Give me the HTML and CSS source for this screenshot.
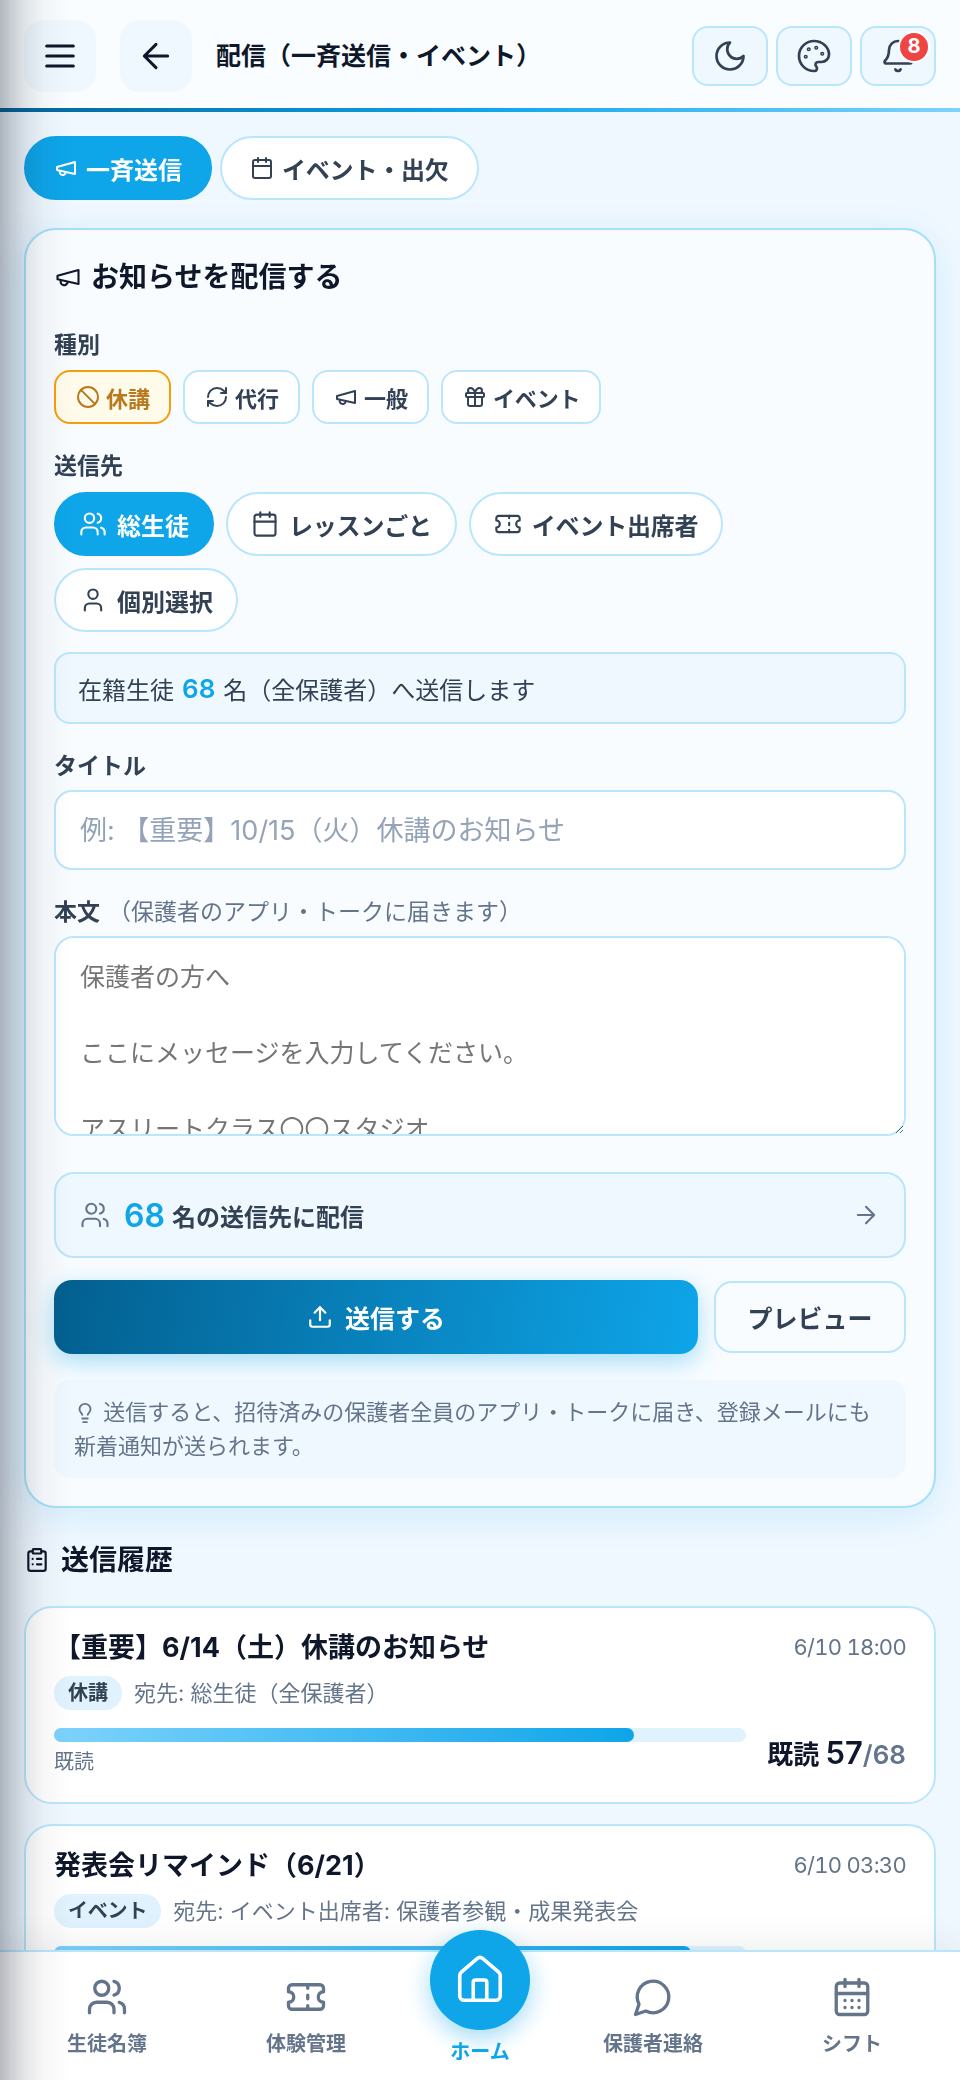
FILE: index.html
```html
<!DOCTYPE html>
<html lang="ja">
<head>
<meta charset="utf-8">
<title>配信（一斉送信・イベント）</title>
<link rel="stylesheet" href="styles.css">
</head>
<body>
<svg class="sprite" aria-hidden="true">
  <symbol id="i-menu" viewBox="0 0 24 24"><path d="M4 6h16M4 12h16M4 18h16"/></symbol>
  <symbol id="i-back" viewBox="0 0 24 24"><path d="m12 19-7-7 7-7M19 12H5"/></symbol>
  <symbol id="i-moon" viewBox="0 0 24 24"><path d="M12 3a6 6 0 0 0 9 9 9 9 0 1 1-9-9Z"/></symbol>
  <symbol id="i-palette" viewBox="0 0 24 24"><path d="M12 22a1 1 0 0 1 0-20 10 9 0 0 1 10 9 5 5 0 0 1-5 5h-2.25a1.75 1.75 0 0 0-1.4 2.8l.3.4a1.75 1.75 0 0 1-1.4 2.8z"/><circle cx="13.5" cy="6.5" r=".5"/><circle cx="17.5" cy="10.5" r=".5"/><circle cx="6.5" cy="12.5" r=".5"/><circle cx="8.5" cy="7.5" r=".5"/></symbol>
  <symbol id="i-bell" viewBox="0 0 24 24"><path d="M10.268 21a2 2 0 0 0 3.464 0"/><path d="M3.262 15.326A1 1 0 0 0 4 17h16a1 1 0 0 0 .74-1.673C19.41 13.956 18 12.499 18 8A6 6 0 0 0 6 8c0 4.499-1.411 5.956-2.738 7.326"/></symbol>
  <symbol id="i-mega" viewBox="0 0 24 24"><path d="m3 11 18-5v12L3 14v-3z"/><path d="M11.6 16.8a3 3 0 1 1-5.8-1.6"/></symbol>
  <symbol id="i-cal" viewBox="0 0 24 24"><rect x="3" y="4" width="18" height="18" rx="2"/><path d="M16 2v4M8 2v4M3 10h18"/></symbol>
  <symbol id="i-ban" viewBox="0 0 24 24"><circle cx="12" cy="12" r="10"/><path d="m4.9 4.9 14.2 14.2"/></symbol>
  <symbol id="i-refresh" viewBox="0 0 24 24"><path d="M3 12a9 9 0 0 1 9-9 9.75 9.75 0 0 1 6.74 2.74L21 8"/><path d="M21 3v5h-5"/><path d="M21 12a9 9 0 0 1-9 9 9.75 9.75 0 0 1-6.74-2.74L3 16"/><path d="M8 16H3v5"/></symbol>
  <symbol id="i-gift" viewBox="0 0 24 24"><rect x="3" y="8" width="18" height="4" rx="1"/><path d="M12 8v13"/><path d="M19 12v7a2 2 0 0 1-2 2H7a2 2 0 0 1-2-2v-7"/><path d="M7.5 8a2.5 2.5 0 0 1 0-5A4.8 8 0 0 1 12 8a4.8 8 0 0 1 4.5-5 2.5 2.5 0 0 1 0 5"/></symbol>
  <symbol id="i-users" viewBox="0 0 24 24"><path d="M16 21v-2a4 4 0 0 0-4-4H6a4 4 0 0 0-4 4v2"/><circle cx="9" cy="7" r="4"/><path d="M22 21v-2a4 4 0 0 0-3-3.87"/><path d="M16 3.13a4 4 0 0 1 0 7.75"/></symbol>
  <symbol id="i-ticket" viewBox="0 0 24 24"><path d="M2 9a3 3 0 0 1 0 6v2a2 2 0 0 0 2 2h16a2 2 0 0 0 2-2v-2a3 3 0 0 1 0-6V7a2 2 0 0 0-2-2H4a2 2 0 0 0-2 2Z"/><path d="M13 5v2M13 17v2M13 11v2"/></symbol>
  <symbol id="i-user" viewBox="0 0 24 24"><path d="M19 21v-2a4 4 0 0 0-4-4H9a4 4 0 0 0-4 4v2"/><circle cx="12" cy="7" r="4"/></symbol>
  <symbol id="i-arrow" viewBox="0 0 24 24"><path d="M5 12h14M12 5l7 7-7 7"/></symbol>
  <symbol id="i-upload" viewBox="0 0 24 24"><path d="M21 15v4a2 2 0 0 1-2 2H5a2 2 0 0 1-2-2v-4"/><path d="m17 8-5-5-5 5"/><path d="M12 3v12"/></symbol>
  <symbol id="i-bulb" viewBox="0 0 24 24"><path d="M15 14c.2-1 .7-1.7 1.5-2.5 1-.9 1.5-2.2 1.5-3.5A6 6 0 0 0 6 8c0 1 .2 2.2 1.5 3.5.7.7 1.3 1.5 1.5 2.5"/><path d="M9 18h6M10 22h4"/></symbol>
  <symbol id="i-clip" viewBox="0 0 24 24"><rect x="8" y="2" width="8" height="4" rx="1"/><path d="M16 4h2a2 2 0 0 1 2 2v14a2 2 0 0 1-2 2H6a2 2 0 0 1-2-2V6a2 2 0 0 1 2-2h2"/><path d="M12 11h4M12 16h4M8 11h.01M8 16h.01"/></symbol>
  <symbol id="i-home" viewBox="0 0 24 24"><path d="M15 21v-8a1 1 0 0 0-1-1h-4a1 1 0 0 0-1 1v8"/><path d="M3 10a2 2 0 0 1 .709-1.528l7-5.999a2 2 0 0 1 2.582 0l7 5.999A2 2 0 0 1 21 10v9a2 2 0 0 1-2 2H5a2 2 0 0 1-2-2z"/></symbol>
  <symbol id="i-chat" viewBox="0 0 24 24"><path d="M7.9 20A9 9 0 1 0 4 16.1L2 22Z"/></symbol>
  <symbol id="i-caldays" viewBox="0 0 24 24"><path d="M8 2v4M16 2v4"/><rect x="3" y="4" width="18" height="18" rx="2"/><path d="M3 10h18M8 14h.01M12 14h.01M16 14h.01M8 18h.01M12 18h.01M16 18h.01"/></symbol>
</svg>

<div class="app">
  <header class="topbar">
    <button class="square-btn"><svg class="icon s40"><use href="#i-menu"/></svg></button>
    <button class="square-btn"><svg class="icon s40"><use href="#i-back"/></svg></button>
    <h1 class="page-title">配信（一斉送信・イベント）</h1>
    <div class="top-actions">
      <button class="tool-btn"><svg class="icon s36"><use href="#i-moon"/></svg></button>
      <button class="tool-btn"><svg class="icon s36"><use href="#i-palette"/></svg></button>
      <button class="tool-btn"><svg class="icon s36"><use href="#i-bell"/></svg><span class="badge">8</span></button>
    </div>
  </header>
  <div class="top-line"></div>

  <main class="content">
    <div class="tabs">
      <button class="tab tab-on"><svg class="icon s24"><use href="#i-mega"/></svg>一斉送信</button>
      <button class="tab kana"><svg class="icon s24"><use href="#i-cal"/></svg>イベント・出欠</button>
    </div>

    <section class="compose">
      <h2 class="compose-title"><svg class="icon s28"><use href="#i-mega"/></svg>お知らせを配信する</h2>

      <div class="label label-first">種別</div>
      <div class="chips">
        <button class="type-chip type-on"><svg class="icon s24"><use href="#i-ban"/></svg>休講</button>
        <button class="type-chip"><svg class="icon s24"><use href="#i-refresh"/></svg>代行</button>
        <button class="type-chip"><svg class="icon s24"><use href="#i-mega"/></svg>一般</button>
        <button class="type-chip kana"><svg class="icon s24"><use href="#i-gift"/></svg>イベント</button>
      </div>

      <div class="label label-next">送信先</div>
      <div class="chips">
        <button class="aud-chip aud-on"><svg class="icon s28"><use href="#i-users"/></svg>総生徒</button>
        <button class="aud-chip kana"><svg class="icon s28"><use href="#i-cal"/></svg>レッスンごと</button>
        <button class="aud-chip kana"><svg class="icon s28"><use href="#i-ticket"/></svg>イベント出席者</button>
        <button class="aud-chip"><svg class="icon s28"><use href="#i-user"/></svg>個別選択</button>
      </div>

      <div class="info-box">在籍生徒 <strong class="info-num">68</strong> 名（全保護者）へ送信します</div>

      <label class="label label-field" for="title">タイトル</label>
      <input class="text-input" id="title" type="text" placeholder="例: 【重要】10/15（火）休講のお知らせ">

      <label class="label label-field" for="body">本文<span class="label-sub">（保護者のアプリ・トークに届きます）</span></label>
      <textarea class="text-area" id="body" placeholder="保護者の方へ

ここにメッセージを入力してください。

アスリートクラス〇〇スタジオ"></textarea>

      <div class="summary">
        <svg class="icon s30 muted"><use href="#i-users"/></svg>
        <span class="summary-num">68</span>
        <span class="summary-text">名の送信先に配信</span>
        <svg class="icon s28 muted summary-arrow"><use href="#i-arrow"/></svg>
      </div>

      <div class="send-row">
        <button class="send-btn"><svg class="icon s26"><use href="#i-upload"/></svg>送信する</button>
        <button class="preview-btn">プレビュー</button>
      </div>

      <p class="note"><svg class="icon s22"><use href="#i-bulb"/></svg> 送信すると、招待済みの保護者全員のアプリ・トークに届き、登録メールにも新着通知が送られます。</p>
    </section>

    <h2 class="history-title"><svg class="icon s26"><use href="#i-clip"/></svg>送信履歴</h2>

    <article class="history-card">
      <div class="h-top"><h3 class="h-title">【重要】6/14（土）休講のお知らせ</h3><time class="h-date">6/10 18:00</time></div>
      <div class="h-meta"><span class="h-tag">休講</span><span>宛先: 総生徒（全保護者）</span></div>
      <div class="h-read">
        <div class="h-bar-wrap">
          <div class="h-bar"><div class="h-fill" style="width:83.8%"></div></div>
          <div class="h-bar-label">既読</div>
        </div>
        <div class="h-stat">既読 <b class="h-stat-num">57</b><span class="h-stat-total">/68</span></div>
      </div>
    </article>

    <article class="history-card">
      <div class="h-top"><h3 class="h-title">発表会リマインド（6/21）</h3><time class="h-date">6/10 03:30</time></div>
      <div class="h-meta"><span class="h-tag kana">イベント</span><span>宛先: イベント出席者: 保護者参観・成果発表会</span></div>
      <div class="h-read">
        <div class="h-bar-wrap">
          <div class="h-bar"><div class="h-fill" style="width:92%"></div></div>
        </div>
      </div>
    </article>
  </main>

  <nav class="bottom-nav">
    <a class="nav-item"><svg class="icon s42"><use href="#i-users"/></svg><span>生徒名簿</span></a>
    <a class="nav-item"><svg class="icon s42"><use href="#i-ticket"/></svg><span>体験管理</span></a>
    <a class="nav-item nav-home"><span class="home-disc"><svg class="icon s54"><use href="#i-home"/></svg></span><span>ホーム</span></a>
    <a class="nav-item"><svg class="icon s42"><use href="#i-chat"/></svg><span>保護者連絡</span></a>
    <a class="nav-item"><svg class="icon s42"><use href="#i-caldays"/></svg><span>シフト</span></a>
  </nav>

  <div class="edge-shade"></div>
</div>
</body>
</html>
```

FILE: styles.css
```css
* { box-sizing: border-box; }

html, body {
  margin: 0;
  height: 100%;
}

body {
  font-family: Inter, "Noto Sans CJK JP", sans-serif;
  color: #0f172a;
  background: #f0f8ff;
  overflow: hidden;
}

button, input, textarea {
  font-family: inherit;
}

.sprite { display: none; }

.kana { letter-spacing: -.2px; }

.icon {
  flex: none;
  fill: none;
  stroke: currentColor;
  stroke-width: 2;
  stroke-linecap: round;
  stroke-linejoin: round;
}
.s22 { width: 22px; height: 22px; }
.s24 { width: 24px; height: 24px; }
.s26 { width: 26px; height: 26px; }
.s28 { width: 28px; height: 28px; stroke-width: 1.8; }
.s30 { width: 30px; height: 30px; stroke-width: 1.7; }
.s36 { width: 36px; height: 36px; stroke-width: 1.8; }
.s40 { width: 40px; height: 40px; stroke-width: 1.8; }
.s42 { width: 42px; height: 42px; stroke-width: 1.9; }
.s54 { width: 54px; height: 54px; stroke-width: 1.6; }
.muted { color: #64748b; }

.app {
  position: relative;
  display: flex;
  flex-direction: column;
  height: 2080px;
  overflow: hidden;
}

/* header */
.topbar {
  display: flex;
  align-items: center;
  gap: 24px;
  height: 108px;
  padding: 4px 24px 0;
  background: #f9fdff;
}
.square-btn {
  display: flex;
  align-items: center;
  justify-content: center;
  width: 72px;
  height: 72px;
  padding: 0;
  border: 0;
  border-radius: 20px;
  background: #f0f8ff;
  color: #0f172a;
}
.page-title {
  margin: 0;
  font-size: 25px;
  line-height: 36px;
  font-weight: 700;
  white-space: nowrap;
}
.top-actions {
  display: flex;
  gap: 8px;
  margin-left: auto;
}
.tool-btn {
  position: relative;
  display: flex;
  align-items: center;
  justify-content: center;
  width: 76px;
  height: 60px;
  padding: 0;
  border: 2px solid #bae6fd;
  border-radius: 16px;
  background: #f0f8ff;
  color: #334155;
}
.badge {
  position: absolute;
  left: 36px;
  top: 3px;
  width: 32px;
  height: 32px;
  border: 2px solid #fff;
  border-radius: 50%;
  background: #ef4444;
  color: #fff;
  font-size: 20px;
  line-height: 27px;
  font-weight: 700;
  text-align: center;
}
.top-line {
  flex: none;
  height: 4px;
  background: linear-gradient(90deg, #03659a 0%, #0ea5e9 50%, #7dd3fc 100%);
}

/* main */
.content {
  flex: 1;
  min-height: 0;
  overflow: hidden;
  padding: 24px 24px 0;
}
.tabs {
  display: flex;
  gap: 8px;
}
.tab {
  display: flex;
  align-items: center;
  gap: 8px;
  height: 64px;
  padding: 0 28px;
  border: 2px solid #bae6fd;
  border-radius: 32px;
  background: #fff;
  color: #334155;
  font-size: 24px;
  font-weight: 700;
}
.tab-on {
  border-color: #0ea5e9;
  background: #0ea5e9;
  color: #fff;
}

.compose {
  margin-top: 28px;
  padding: 29px 28px 28px;
  border: 2px solid #a6dff8;
  border-radius: 32px;
  background: #f8fcff;
  box-shadow: 0 8px 40px rgba(14, 165, 233, .14);
}
.compose-title {
  display: flex;
  align-items: center;
  gap: 9px;
  margin: 0;
  font-size: 28px;
  line-height: 36px;
  font-weight: 700;
}
.label {
  display: block;
  margin-bottom: 12px;
  color: #334155;
  font-size: 23px;
  line-height: 28px;
  font-weight: 700;
}
.label-first { margin-top: 36px; margin-bottom: 11px; }
.label-next { margin-top: 28px; }
.label-field { margin-top: 28px; margin-bottom: 10px; }
.label-sub {
  margin-left: 8px;
  color: #64748b;
  font-weight: 400;
}

.chips {
  display: flex;
  flex-wrap: wrap;
  gap: 12px;
}
.type-chip {
  display: flex;
  align-items: center;
  gap: 6px;
  height: 54px;
  padding: 0 19px 0 20px;
  border: 2px solid #bae6fd;
  border-radius: 16px;
  background: #fff;
  color: #334155;
  font-size: 22px;
  font-weight: 700;
}
.type-on {
  border-color: #f59e0b;
  background: #fffbeb;
  color: #b9791f;
}
.aud-chip {
  display: flex;
  align-items: center;
  gap: 10px;
  height: 64px;
  padding: 0 23px;
  border: 2px solid #bae6fd;
  border-radius: 32px;
  background: #fff;
  color: #334155;
  font-size: 24px;
  font-weight: 700;
}
.aud-on {
  border-color: #0ea5e9;
  background: #0ea5e9;
  color: #fff;
}

.info-box {
  display: flex;
  align-items: center;
  gap: 8px;
  height: 72px;
  margin-top: 20px;
  padding: 0 22px;
  border: 2px solid #bae6fd;
  border-radius: 16px;
  background: #f0f8ff;
  color: #334155;
  font-size: 24px;
}
.info-num {
  color: #0ea5e9;
  font-size: 26px;
  font-weight: 600;
}

.text-input,
.text-area {
  display: block;
  width: 100%;
  border: 2px solid #bae6fd;
  background: #fff;
  color: #0f172a;
  outline: 0;
}
.text-input {
  height: 80px;
  padding: 0 24px;
  border-radius: 18px;
  font-size: 27px;
}
.text-input::placeholder { color: #94a3b8; opacity: 1; }
.text-area {
  height: 200px;
  padding: 20px 24px;
  border-radius: 20px;
  font-size: 25px;
  line-height: 38px;
}
.text-area::placeholder { color: #757575; opacity: 1; }

.summary {
  display: flex;
  align-items: center;
  height: 86px;
  margin-top: 36px;
  padding: 0 24px;
  border: 2px solid #bae6fd;
  border-radius: 20px;
  background: #f0f8ff;
}
.summary-num {
  margin-left: 14px;
  color: #0ea5e9;
  font-size: 32px;
  font-weight: 600;
}
.summary-text {
  margin-left: 7px;
  color: #334155;
  font-size: 24px;
  font-weight: 700;
}
.summary-arrow { margin-left: auto; }

.send-row {
  display: flex;
  align-items: center;
  gap: 16px;
  margin-top: 22px;
}
.send-btn {
  flex: 1;
  display: flex;
  align-items: center;
  justify-content: center;
  gap: 12px;
  height: 74px;
  border: 0;
  border-radius: 18px;
  background: linear-gradient(100deg, #035f8f 0%, #0ea5e9 100%);
  box-shadow: 0 8px 24px rgba(14, 165, 233, .35);
  color: #fff;
  font-size: 25px;
  font-weight: 700;
}
.preview-btn {
  width: 192px;
  height: 72px;
  padding: 0;
  border: 2px solid #bae6fd;
  border-radius: 18px;
  background: #f8fcff;
  color: #334155;
  font-size: 25px;
  font-weight: 700;
}
.note {
  margin: 26px 0 0;
  padding: 15px 20px;
  border-radius: 16px;
  background: #f0f8ff;
  color: #64748b;
  font-size: 22px;
  line-height: 34px;
}
.note .icon { vertical-align: -4px; margin-right: 1px; }

/* history */
.history-title {
  display: flex;
  align-items: center;
  gap: 11px;
  margin: 34px 0 28px;
  font-size: 28px;
  line-height: 36px;
  font-weight: 700;
}
.history-card {
  margin-bottom: 20px;
  padding: 22px 28px 26px;
  border: 2px solid #bae6fd;
  border-radius: 28px;
  background: #fff;
}
.h-top {
  display: flex;
  align-items: center;
  justify-content: space-between;
}
.h-title {
  margin: 0;
  font-size: 27px;
  line-height: 36px;
  font-weight: 700;
}
.h-date {
  margin-top: -2px;
  color: #64748b;
  font-size: 22px;
  font-variant-numeric: tabular-nums;
  letter-spacing: -.7px;
}
.h-meta {
  display: flex;
  align-items: center;
  gap: 12px;
  margin-top: 10px;
  color: #64748b;
  font-size: 22px;
  line-height: 34px;
}
.h-tag {
  height: 34px;
  padding: 0 14px;
  border-radius: 17px;
  background: #e0f2fe;
  color: #334155;
  font-size: 20px;
  font-weight: 700;
}
.h-read {
  display: flex;
  align-items: center;
  justify-content: space-between;
  margin-top: 18px;
}
.h-bar-wrap { flex: none; width: 692px; }
.h-bar {
  height: 14px;
  border-radius: 7px;
  background: #e0f2fe;
}
.h-fill {
  height: 100%;
  border-radius: 7px;
  background: linear-gradient(90deg, #7dd3fc, #0ea5e9);
}
.h-bar-label {
  margin-top: 6px;
  color: #64748b;
  font-size: 20px;
  line-height: 28px;
}
.h-stat {
  color: #0f172a;
  font-size: 26px;
  font-weight: 700;
  white-space: nowrap;
}
.h-stat-num { font-size: 31px; font-weight: 600; }
.h-stat-total { color: #64748b; font-size: 26px; font-weight: 600; }

/* bottom nav */
.bottom-nav {
  position: relative;
  z-index: 2;
  flex: none;
  display: grid;
  grid-template-columns: 214px 184px 164px 182px 216px;
  height: 130px;
  padding-top: 24px;
  border-top: 2px solid #bae6fd;
  background: #fff;
  box-shadow: 0 -8px 32px rgba(15, 23, 42, .07);
}
.nav-item {
  display: flex;
  flex-direction: column;
  align-items: center;
  color: #64748b;
  font-size: 20px;
  line-height: 28px;
  font-weight: 700;
}
.nav-item .icon { margin-bottom: 12px; }
.nav-home { color: #0ea5e9; }
.home-disc {
  display: flex;
  align-items: center;
  justify-content: center;
  width: 100px;
  height: 100px;
  margin: -46px 0 8px;
  border-radius: 50%;
  background: #0ea5e9;
  box-shadow: 0 8px 24px rgba(14, 165, 233, .4);
  color: #fff;
}
.nav-item .home-disc .icon { margin: 0; }

/* shadow of the off-canvas drawer along the left edge */
.edge-shade {
  position: absolute;
  z-index: 3;
  left: 0;
  top: 0;
  bottom: 0;
  width: 70px;
  pointer-events: none;
  background: linear-gradient(90deg, rgba(15, 23, 42, .3) 0, rgba(15, 23, 42, .2) 12px, rgba(15, 23, 42, .1) 26px, rgba(15, 23, 42, .035) 44px, rgba(15, 23, 42, 0) 70px);
}
```
